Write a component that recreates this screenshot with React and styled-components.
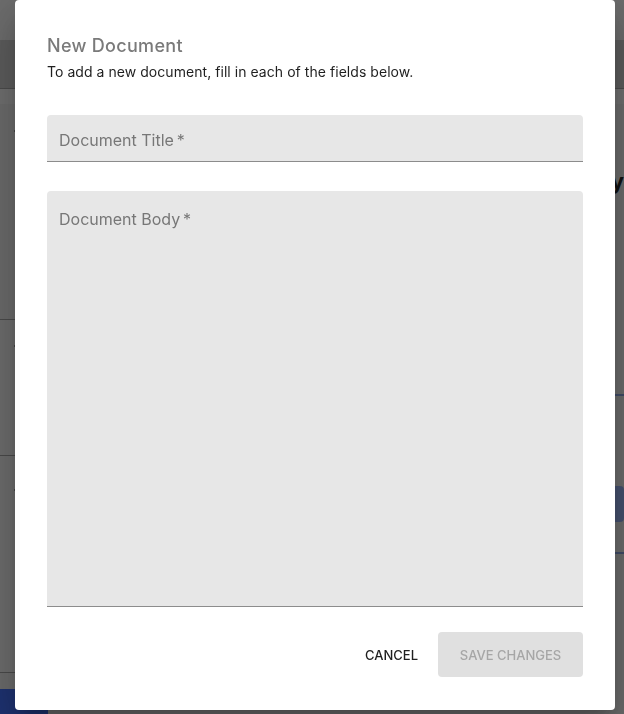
import React from "react";
import styled, { createGlobalStyle } from "styled-components";

const GlobalStyle = createGlobalStyle`
  * { box-sizing: border-box; }
  html, body { margin: 0; padding: 0; height: 100%; overflow: hidden; }
  body {
    font-family: Inter, "Noto Sans", "Liberation Sans", sans-serif;
    background: #d6d6d6;
  }
`;

// ---------------------------------------------------------------- page under the dialog
const Page = styled.div`
  height: 714px;
  display: flex;
  flex-direction: column;
  background: #d6d6d6;
`;

const TopBar = styled.div`
  height: 40px;
  background: #d8d8d8;
`;

const ToolBar = styled.div`
  height: 49px;
  background: #b8b8b8;
  border-bottom: 1px solid #969696;
`;

const SubBar = styled.div`
  height: 15px;
  background: #dedede;
`;

const Main = styled.div`
  flex: 1;
  display: flex;
`;

const ListColumn = styled.div`
  width: 600px;
  display: flex;
  flex-direction: column;
`;

const ListRow = styled.div`
  height: ${(p) => p.h}px;
  padding: ${(p) => p.tick}px 0 0 14px;
  border-bottom: ${(p) => (p.line ? "1px solid #949494" : "none")};
  background: ${(p) => (p.light ? "#dadada" : "transparent")};
`;

const Tick = styled.span`
  display: block;
  width: 4px;
  height: 2px;
  background: #8a8a8a;
`;

const BlueButton = styled.div`
  margin-top: auto;
  width: 48px;
  height: 25px;
  background: #3c64e0;
`;

const SideColumn = styled.div`
  flex: 1;
  padding: 64px 0 0 14px;
  color: #222;
`;

const SideHeading = styled.div`
  font-size: 22px;
  font-weight: 700;
  margin-bottom: 52px;
`;

const SideText = styled.div`
  font-size: 15px;
  line-height: 25px;
  color: #444;
`;

const SideCard = styled.div`
  margin-top: 98px;
  height: 160px;
  border-top: 2px solid #7f95cc;
  border-bottom: 2px solid #7f95cc;
  padding-top: 90px;
`;

const SideButton = styled.div`
  height: 36px;
  border-radius: 4px;
  background: #8aa0dc;
`;

// ---------------------------------------------------------------- dialog
const Backdrop = styled.div`
  position: fixed;
  inset: 0;
  background: rgba(0, 0, 0, 0.5);
  display: flex;
  align-items: flex-start;
  padding-left: 15px;
`;

const Dialog = styled.div`
  width: 600px;
  height: 710px;
  background: #fff;
  border-radius: 4px;
  padding: 36px 32px 33px;
  display: flex;
  flex-direction: column;
  box-shadow: 0px 11px 15px -7px rgba(0, 0, 0, 0.2),
    0px 24px 38px 3px rgba(0, 0, 0, 0.14), 0px 9px 46px 8px rgba(0, 0, 0, 0.12);
`;

const Title = styled.h2`
  margin: 0;
  font-size: 18px;
  line-height: 20px;
  font-weight: 500;
  letter-spacing: 0.3px;
  color: #7a7a7a;
`;

const Subtitle = styled.p`
  margin: 6px 0 33px;
  font-size: 14px;
  line-height: 20px;
  letter-spacing: 0.05px;
  color: #1f1f1f;
`;

const Field = styled.div`
  height: ${(p) => p.h}px;
  margin-bottom: ${(p) => p.gap || 0}px;
  background: #e7e7e7;
  border-radius: 4px 4px 0 0;
  border-bottom: 1px solid #8c8c8c;
  padding: ${(p) => p.top}px 12px 0;
`;

const Label = styled.label`
  display: block;
  font-size: 16px;
  line-height: 20px;
  color: #777;
`;

const Actions = styled.div`
  margin-top: 25px;
  display: flex;
  justify-content: flex-end;
  align-items: center;
  gap: 8px;
`;

const TextButton = styled.button`
  border: none;
  background: transparent;
  font-family: inherit;
  font-size: 13px;
  font-weight: 500;
  color: #1f1f1f;
  padding: 8px 12px;
  cursor: pointer;
`;

const SaveButton = styled.button`
  width: 145px;
  height: 45px;
  border: none;
  border-radius: 4px;
  background: #e0e0e0;
  font-family: inherit;
  font-size: 13px;
  font-weight: 500;
  color: #a6a6a6;
`;

const App = () => {
  return (
    <>
      <GlobalStyle />
      <Page>
        <TopBar />
        <ToolBar />
        <SubBar />
        <Main>
          <ListColumn>
            <ListRow h={216} tick={26} line>
              <Tick />
            </ListRow>
            <ListRow h={136} tick={25} line light>
              <Tick />
            </ListRow>
            <ListRow h={217} tick={33} line light>
              <Tick />
            </ListRow>
            <BlueButton />
          </ListColumn>
          <SideColumn>
            <SideHeading>Summary</SideHeading>
            <SideText>Document</SideText>
            <SideText>for</SideText>
            <SideCard>
              <SideButton />
            </SideCard>
          </SideColumn>
        </Main>
      </Page>
      <Backdrop>
        <Dialog>
          <Title>New Document</Title>
          <Subtitle>To add a new document, fill in each of the fields below.</Subtitle>
          <Field h={47} top={15} gap={29}>
            <Label>Document Title{"\u2009"}*</Label>
          </Field>
          <Field h={416} top={18}>
            <Label>Document Body{"\u2009"}*</Label>
          </Field>
          <Actions>
            <TextButton>CANCEL</TextButton>
            <SaveButton disabled>SAVE CHANGES</SaveButton>
          </Actions>
        </Dialog>
      </Backdrop>
    </>
  );
};

export default App;
